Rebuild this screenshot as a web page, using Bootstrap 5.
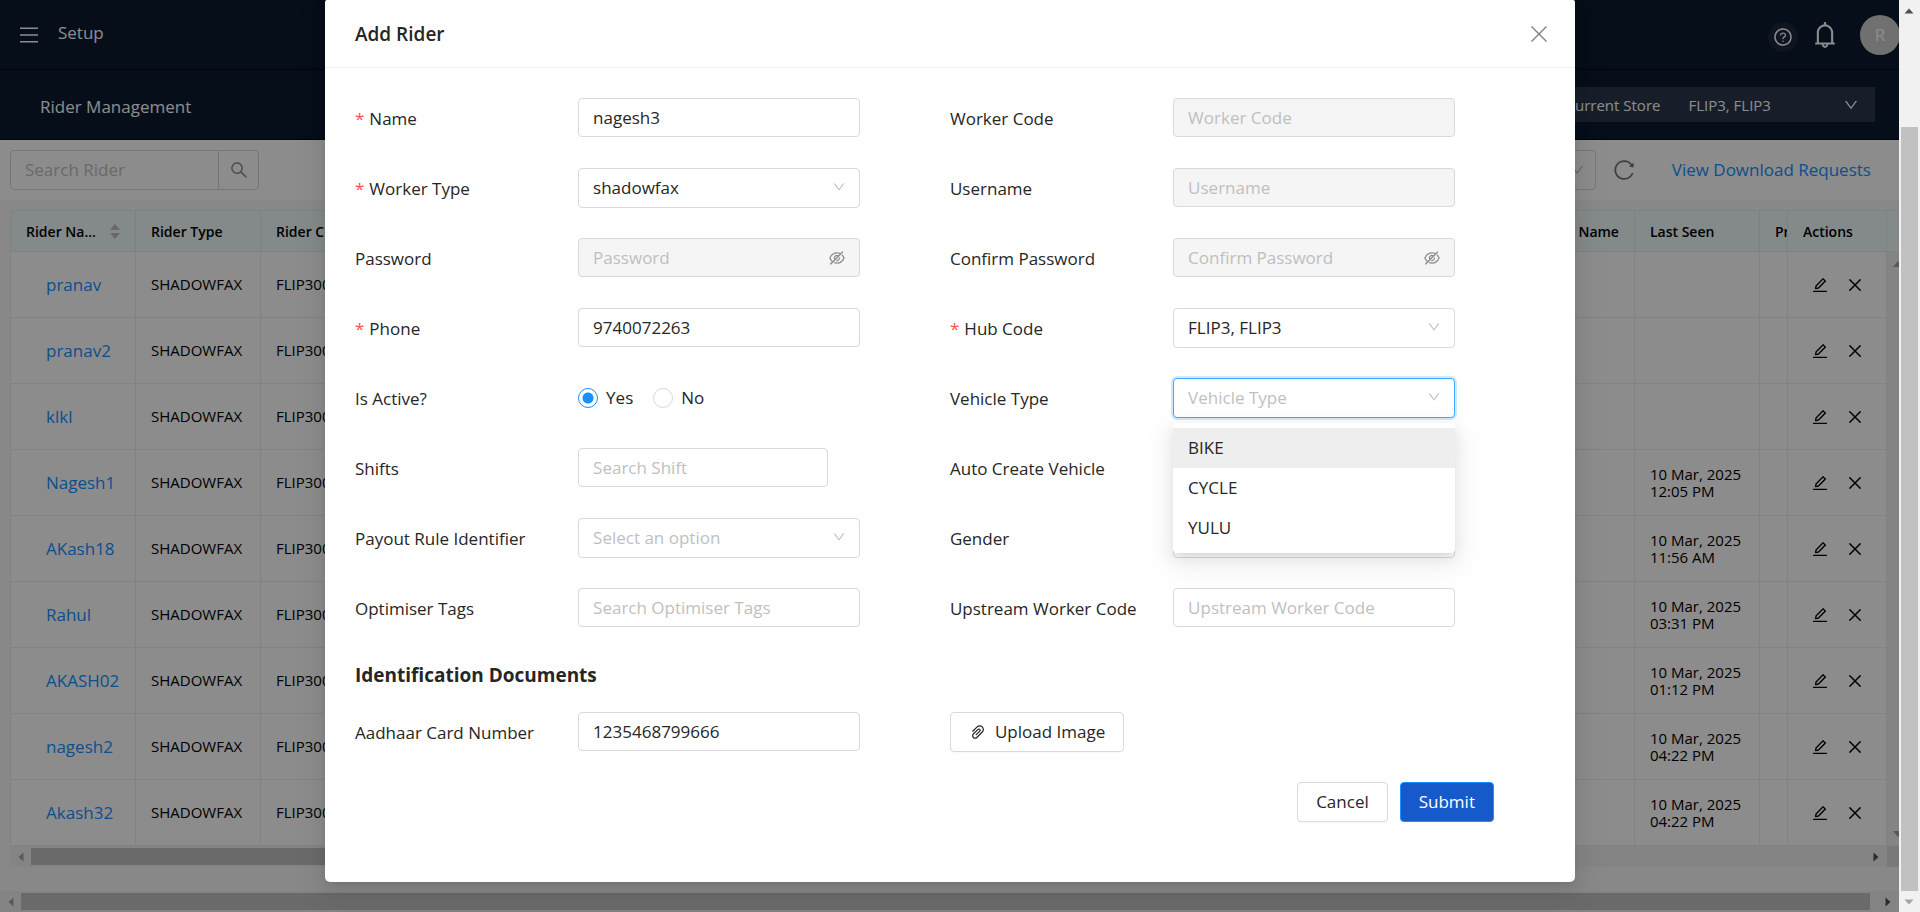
<!DOCTYPE html>
<html lang="en">
<head>
<meta charset="utf-8">
<meta name="viewport" content="width=device-width, initial-scale=1">
<title>Rider Management</title>
<link href="https://cdn.jsdelivr.net/npm/bootstrap@5.3.0/dist/css/bootstrap.min.css" rel="stylesheet">
<style>
  :root { --ink: #262626; --line: #d9d9d9; --hint: #bfbfbf; --blue: #1890ff; --navy: #0c1a30; }
  body { font-family: "Open Sans", "Noto Sans", sans-serif; font-size: 17px; line-height: 24px; color: var(--ink); background: #f8f8f8; }
  a { color: var(--blue); text-decoration: none; }
  .ico { width: 16px; height: 16px; fill: currentColor; display: block; flex: none; }
  .ico-12 { width: 12px; height: 12px; }
  .ico-18 { width: 18px; height: 18px; }
  .ico-20 { width: 20px; height: 20px; }
  .ico-24 { width: 24px; height: 24px; }
  .ico-30 { width: 30px; height: 30px; }
  .plain { background: none; border: 0; padding: 0; color: inherit; }
  .hint { color: var(--hint); }

  /* page behind the dialog */
  .top-bar { height: 70px; background: var(--navy); color: #fff; border-bottom: 1px solid #030914; }
  .page-name { font-size: 17px; font-weight: 400; line-height: 24px; }
  .help { width: 30px; height: 30px; background: #1b273c; }
  .avatar { width: 40px; height: 40px; background: #ccc; color: #fff; margin-right: -1px; }
  .store { height: 35px; width: 380px; background: #2b384d; font-size: 15px; }
  .tools { height: 60px; padding-left: 10px; background: #fff; }
  .box { height: 40px; border: 1px solid var(--line); border-radius: 4px; background: #fff; }
  .filter { width: 200px; }
  .finder { width: 249px; }
  .finder input { font-size: 17px; border: 0; padding: 0 14px; background: none; min-width: 0; }
  .finder input::placeholder, .field::placeholder { color: var(--hint); opacity: 1; }
  .finder button { width: 40px; flex: none; border-left: 1px solid var(--line); color: #8c8c8c; }

  .riders-area { padding: 10px 0 0 10px; }
  .riders { table-layout: fixed; border-collapse: separate; border-spacing: 0; font-size: 15px; line-height: 17px; font-weight: 500; color: #000; width: 100%; border-left: 1px solid #ededed; }
  .riders th { height: 42px; padding: 0 15px; font-size: 14px; background: #f0fafb; font-weight: 600; border: solid #e3ecec; border-width: 1px 1px 1px 0; white-space: nowrap; overflow: hidden; }
  .riders th:first-child { border-top-left-radius: 6px; }
  .riders td { height: 66px; padding: 0 15px; background: #fff; border: solid #ededed; border-width: 0 1px 1px 0; overflow: hidden; }
  .riders td:first-child { padding-left: 35px; font-size: 17px; font-weight: 400; }
  .riders td.gutter { background: #f1f1f1; border: 0; padding: 9px 0 9px 6px; vertical-align: top; color: #a3a3a3; }
  .riders tr:last-child td.gutter { vertical-align: bottom; }
  .gutter svg { width: 10px; height: 6px; fill: currentColor; display: block; }
  .riders th.gutter-head { border-right: 0; }
  .w-col { width: 125px; }
  .w-pr { width: 28px; }
  .w-act { width: 99px; }
  .w-gut { width: 12px; }
  .corner { background: #dcdcdc; }
  .sorter { color: var(--hint); gap: 3px; }
  .sorter svg { width: 10px; height: 6px; fill: currentColor; }

  /* scroll bars */
  .bar-x { height: 21px; background: #f1f1f1; }
  .bar-end { width: 21px; height: 21px; color: #505050; flex: none; }
  .bar-end svg { width: 10px; height: 10px; fill: currentColor; }
  .bar-end.spent { color: #a3a3a3; }
  .thumb-x { height: 17px; background: #c1c1c1; }
  .bar-y { width: 21px; background: #f1f1f1; flex: none; }
  .thumb-y { width: 17px; background: #c1c1c1; flex: 878 0 0; }
  .track-y { flex: 122 0 0; }

  .veil { position: absolute; inset: 0; background: rgba(0,0,0,.45); }
  .dialog-layer { position: absolute; inset: 0 -1px 0 0; }
  .dialog { width: 1250px; max-width: 100%; background: #fff; border: 0; border-radius: 2px 2px 5px 5px; box-shadow: 0 3px 6px -4px rgba(0,0,0,.12), 0 6px 16px rgba(0,0,0,.08), 0 9px 28px 8px rgba(0,0,0,.05); color: var(--ink); }
  .dialog-head { height: 68px; padding: 0 24px 0 30px; border-bottom: 1px solid #f0f0f0; }
  .dialog-title { font-size: 19px; font-weight: 600; line-height: 24px; }
  .dialog-form { padding: 30px 30px 60px; }
  .pair { margin-bottom: 30px; height: 40px; }
  .lab { width: 37.5%; padding-top: 2px; }
  .req::before { content: "*"; color: #ff4d4f; margin-right: 5px; }
  .field { display: block; height: 39px; margin-bottom: 1px; width: 100%; font-size: 17px; line-height: 24px; padding: 0 14px; color: var(--ink); border: 1px solid var(--line); border-radius: 4px; background-color: #fff; }
  .field:disabled { background-color: #f5f5f5; opacity: 1; }
  select.field { height: 40px; margin-bottom: 0; appearance: none; padding-right: 40px; }
  select.hinted { color: var(--hint); }
  select.opened { border-color: #40a9ff; box-shadow: 0 0 0 2px rgba(24,144,255,.2); outline: 0; }
  .short { width: 250px; }
  .field-ico { position: absolute; right: 30px; top: 11px; color: #8c8c8c; pointer-events: none; }
  .field-ico.arrow { color: var(--hint); width: 14px; height: 14px; top: 12px; }
  .choices { top: 45px; left: 0; right: 16px; width: auto; border: 0; border-radius: 4px; padding: 5px 0; margin: 0; box-shadow: 0 3px 6px -4px rgba(0,0,0,.12), 0 6px 16px rgba(0,0,0,.08), 0 9px 28px 8px rgba(0,0,0,.05); }
  .choices button { height: 40px; padding: 0 15px; font-size: 17px; color: var(--ink); }
  .choices .picked { background: #eee; }
  .dot { appearance: none; width: 20px; height: 20px; border: 1px solid var(--line); border-radius: 50%; margin: 0; background: #fff; }
  .dot:checked { border-color: var(--blue); background: radial-gradient(circle, var(--blue) 5px, #fff 6px); }
  .section-title { height: 54px; padding-top: 5px; font-size: 19px; font-weight: 700; line-height: 24px; margin: 0; }
  .act { height: 40px; font-size: 17px; line-height: 24px; padding: 0 18px; border: 1px solid var(--line); border-radius: 4px; color: var(--ink); background: #fff; box-shadow: 0 2px 0 rgba(0,0,0,.02); }
  .act-main { background: #1659cb; border-color: var(--blue); color: #fff; }
  .act-row { padding-right: 51px; gap: 12px; }
</style>
</head>
<body>
<svg class="d-none" aria-hidden="true">
  <symbol id="i-cross" viewBox="0 0 16 16"><path d="M.5.5l15 15M15.5.5l-15 15" fill="none" stroke="currentColor"/></symbol>
  <symbol id="i-down" viewBox="0 0 1024 1024"><path d="M884 256h-75c-5.1 0-9.9 2.5-12.9 6.6L512 654.2 227.9 262.6c-3-4.1-7.8-6.6-12.9-6.6h-75c-6.5 0-10.3 7.4-6.5 12.7l352.6 486.1c12.8 17.6 39 17.6 51.7 0l352.6-486.1c3.9-5.3.1-12.7-6.4-12.7z"/></symbol>
  <symbol id="i-search" viewBox="0 0 1024 1024"><path d="M909.6 854.5L649.9 594.8C690.2 542.7 712 479 712 412c0-80.2-31.3-155.4-87.9-212.1-56.6-56.7-132-87.9-212.1-87.9s-155.5 31.3-212.1 87.9C143.2 256.5 112 331.8 112 412c0 80.1 31.3 155.5 87.9 212.1C256.5 680.8 331.8 712 412 712c67 0 130.6-21.8 182.7-62l259.7 259.6a8.2 8.2 0 0011.6 0l43.6-43.5a8.2 8.2 0 000-11.6zM570.4 570.4C528 612.7 471.8 636 412 636s-116-23.3-158.4-65.6C211.3 528 188 471.8 188 412s23.3-116.1 65.6-158.4C296 211.3 352.2 188 412 188s116.1 23.2 158.4 65.6S636 352.2 636 412s-23.3 116.1-65.6 158.4z"/></symbol>
  <symbol id="i-reload" viewBox="0 0 1024 1024"><path d="M909.1 209.3l-56.4 44.1C775.8 155.1 656.2 92 521.9 92 290 92 102.3 279.5 102 511.5 101.7 743.7 289.8 932 521.9 932c181.3 0 335.8-115 394.6-276.1 1.5-4.2-.7-8.9-4.9-10.3l-56.7-19.5a8 8 0 00-10.1 4.8c-1.8 5-3.8 10-5.9 14.9-17.3 41-42.1 77.8-73.7 109.4A344.77 344.77 0 01655.9 829c-42.3 17.9-87.4 27-133.8 27-46.5 0-91.5-9.1-133.8-27A341.5 341.5 0 01279 755.2a342.16 342.16 0 01-73.7-109.4c-17.9-42.4-27-87.4-27-133.9s9.1-91.5 27-133.9c17.3-41 42.1-77.8 73.7-109.4 31.6-31.6 68.4-56.4 109.3-73.8 42.3-17.9 87.4-27 133.8-27 46.5 0 91.5 9.1 133.8 27a341.5 341.5 0 01109.3 73.8c9.9 9.9 19.2 20.4 27.8 31.4l-60.2 47a8 8 0 003 14.1l175.6 43c5 1.2 9.9-2.6 9.9-7.7l.8-180.9c-.1-6.6-7.8-10.3-13-6.2z"/></symbol>
  <symbol id="i-menu" viewBox="0 0 18 16"><path d="M0 .5h18v1.4H0zM0 7.3h18v1.4H0zM0 14.1h18v1.4H0z"/></symbol>
  <symbol id="i-bell" viewBox="0 0 1024 1024"><path d="M816 768h-24V428c0-141.1-104.3-257.8-240-277.2V112c0-22.1-17.9-40-40-40s-40 17.9-40 40v38.8C336.3 170.2 232 286.9 232 428v340h-24c-17.7 0-32 14.3-32 32v32c0 4.4 3.6 8 8 8h216c0 61.8 50.2 112 112 112s112-50.2 112-112h216c4.4 0 8-3.6 8-8v-32c0-17.7-14.3-32-32-32zM512 888c-26.5 0-48-21.5-48-48h96c0 26.5-21.5 48-48 48zM304 768V428c0-55.6 21.6-107.8 60.9-147.1S456.4 220 512 220c55.6 0 107.8 21.6 147.1 60.9S720 372.4 720 428v340H304z"/></symbol>
  <symbol id="i-help" viewBox="0 0 1024 1024"><path d="M512 64C264.6 64 64 264.6 64 512s200.6 448 448 448 448-200.6 448-448S759.4 64 512 64zm0 820c-205.4 0-372-166.6-372-372s166.6-372 372-372 372 166.6 372 372-166.6 372-372 372z"/><path d="M623.6 316.7C593.6 290.4 554 276 512 276s-81.6 14.5-111.6 40.7C369.2 344 352 380.7 352 420v7.6c0 4.4 3.6 8 8 8h48c4.4 0 8-3.6 8-8V420c0-44.1 43.1-80 96-80s96 35.9 96 80c0 31.1-22 59.6-56.1 72.7-21.2 8.1-39.2 22.3-52.1 40.9-13.1 19-19.9 41.8-19.9 64.9V620c0 4.4 3.6 8 8 8h48c4.4 0 8-3.6 8-8v-22.7a48.3 48.3 0 0130.9-44.8c59-22.7 97.1-74.7 97.1-132.5.1-39.3-17.1-76-48.3-103.3zM472 732a40 40 0 1080 0 40 40 0 10-80 0z"/></symbol>
  <symbol id="i-eye" viewBox="0 0 1024 1024"><path d="M942.2 486.2Q889.47 375.11 816.7 305l-50.88 50.88C807.31 395.53 843.45 447.4 874.7 512 791.5 684.2 673.4 766 512 766q-72.67 0-133.87-22.38L323 798.75Q408 838 512 838q288.3 0 430.2-300.3a60.29 60.29 0 000-51.5zm-63.57-320.64L836 122.88a8 8 0 00-11.32 0L715.31 232.2Q624.86 186 512 186q-288.3 0-430.2 300.3a60.3 60.3 0 000 51.5q56.69 119.4 136.5 191.41L112.48 835a8 8 0 000 11.31L155.17 889a8 8 0 0011.31 0l712.15-712.12a8 8 0 000-11.32zM149.3 512C232.6 339.8 350.7 258 512 258c54.54 0 104.13 9.36 149.12 28.39l-70.3 70.3a176 176 0 00-238.13 238.13l-83.42 83.42C223.1 637.49 183.3 582.28 149.3 512zm246.7 0a112.11 112.11 0 01146.2-106.69L401.31 546.2A112 112 0 01396 512z"/><path d="M508 624c-3.46 0-6.87-.16-10.25-.47l-52.82 52.82a176.09 176.09 0 00227.42-227.42l-52.82 52.82c.31 3.38.47 6.79.47 10.25a111.94 111.94 0 01-112 112z"/></symbol>
  <symbol id="i-edit" viewBox="0 0 1024 1024"><path d="M257.7 752c2 0 4-.2 6-.5L431.9 722c2-.4 3.9-1.3 5.3-2.8l423.9-423.9a9.96 9.96 0 000-14.1L694.9 114.9c-1.9-1.9-4.4-2.9-7.1-2.9s-5.2 1-7.1 2.9L256.8 538.8c-1.5 1.5-2.4 3.3-2.8 5.3l-29.5 168.2a33.5 33.5 0 009.4 29.8c6.6 6.4 14.9 9.9 23.8 9.9zm67.4-174.4L687.8 215l73.3 73.3-362.7 362.6-88.9 15.7 15.6-89zM880 836H144c-17.7 0-32 14.3-32 32v36c0 4.4 3.6 8 8 8h784c4.4 0 8-3.6 8-8v-36c0-17.7-14.3-32-32-32z"/></symbol>
  <symbol id="i-clip" viewBox="0 0 1024 1024"><path d="M779.3 196.6c-94.2-94.2-247.6-94.2-341.7 0l-261 260.8c-1.7 1.7-2.6 4-2.6 6.4s.9 4.7 2.6 6.4l36.9 36.9a9 9 0 0012.7 0l261-260.8c32.4-32.4 75.5-50.2 121.3-50.2s88.9 17.8 121.2 50.2c32.4 32.4 50.2 75.5 50.2 121.2 0 45.8-17.8 88.8-50.2 121.2l-266 265.9-43.1 43.1c-40.3 40.3-105.8 40.3-146.1 0-19.5-19.5-30.2-45.4-30.2-73s10.7-53.5 30.2-73l263.9-263.8c6.7-6.6 15.5-10.3 24.9-10.3h.1c9.4 0 18.1 3.7 24.7 10.3 6.7 6.7 10.3 15.5 10.3 24.9 0 9.3-3.7 18.1-10.3 24.7L372.4 653c-1.7 1.7-2.6 4-2.6 6.4s.9 4.7 2.6 6.4l36.9 36.9a9 9 0 0012.7 0l215.6-215.6c19.9-19.9 30.8-46.3 30.8-74.4s-11-54.6-30.8-74.4c-41.1-41.1-107.9-41-149 0L463 364 224.8 602.1A172.22 172.22 0 00174 724.8c0 46.3 18.1 89.8 50.8 122.5 33.9 33.8 78.3 50.7 122.7 50.7 44.4 0 88.8-16.9 122.6-50.7l309.2-309C824.8 492.7 850 432 850 367.5c.1-64.6-25.1-125.3-70.7-170.9z"/></symbol>
  <symbol id="c-up" viewBox="0 0 10 6"><path d="M5 0l5 6H0z"/></symbol>
  <symbol id="c-down" viewBox="0 0 10 6"><path d="M5 6L0 0h10z"/></symbol>
  <symbol id="t-up" viewBox="0 0 10 10"><path d="M5 2.5L9.5 7.5H.5z"/></symbol>
  <symbol id="t-down" viewBox="0 0 10 10"><path d="M5 7.5L.5 2.5h9z"/></symbol>
  <symbol id="t-left" viewBox="0 0 10 10"><path d="M2.5 5L7.5.5v9z"/></symbol>
  <symbol id="t-right" viewBox="0 0 10 10"><path d="M7.5 5L2.5.5v9z"/></symbol>
</svg>

<div class="d-flex min-vh-100">
  <div class="flex-grow-1 position-relative overflow-hidden d-flex flex-column">

    <header class="top-bar d-flex align-items-center">
      <button class="plain ms-3 ps-1 pe-3 me-1" aria-label="Menu"><svg class="ico ico-18"><use href="#i-menu"/></svg></button>
      <span class="flex-grow-1 pb-1">Setup</span>
      <button class="plain help rounded-circle d-flex align-items-center justify-content-center me-2 mt-1" aria-label="Help"><svg class="ico ico-20"><use href="#i-help"/></svg></button>
      <button class="plain ms-1 me-3" aria-label="Notifications"><svg class="ico ico-30"><use href="#i-bell"/></svg></button>
      <span class="avatar rounded-circle d-flex align-items-center justify-content-center ms-1">R</span>
    </header>

    <div class="top-bar d-flex align-items-center justify-content-between ps-4">
      <h1 class="page-name m-0 ps-3 pt-1">Rider Management</h1>
      <div class="store d-flex align-items-center justify-content-end me-4 pe-3">
        <span class="me-4 pe-1">Current Store</span>
        <button class="plain d-flex align-items-center" type="button"><span class="me-5 pe-3">FLIP3, FLIP3</span><svg class="ico ms-2"><use href="#i-down"/></svg></button>
      </div>
    </div>

    <div class="tools d-flex align-items-center justify-content-between">
      <div class="box finder d-flex">
        <input class="flex-grow-1" type="text" placeholder="Search Rider" aria-label="Search Rider">
        <button class="plain d-flex align-items-center justify-content-center" aria-label="Search"><svg class="ico ico-20"><use href="#i-search"/></svg></button>
      </div>
      <div class="d-flex align-items-center me-4 pe-1">
        <button class="box filter d-flex align-items-center justify-content-end" aria-label="Filter"><svg class="ico hint me-1"><use href="#i-down"/></svg></button>
        <button class="plain text-secondary ms-3 me-4" aria-label="Reload"><svg class="ico ico-24"><use href="#i-reload"/></svg></button>
        <a class="ms-2 ps-1" href="#">View Download Requests</a>
      </div>
    </div>

    <div class="riders-area flex-grow-1">
      <table class="riders">
        <colgroup><col class="w-col"><col class="w-col"><col><col class="w-col"><col class="w-col"><col class="w-pr"><col class="w-act"><col class="w-gut"></colgroup>
        <thead><tr>
          <th><span class="d-flex align-items-center justify-content-between">Rider Na... <span class="sorter d-flex flex-column"><svg><use href="#c-up"/></svg><svg><use href="#c-down"/></svg></span></span></th>
          <th>Rider Type</th><th>Rider Code</th><th class="text-end">Name</th><th>Last Seen</th><th>Pr</th><th>Actions</th><th class="gutter-head"></th>
        </tr></thead>
        <tbody id="rows"></tbody>
      </table>
      <div class="d-flex">
        <div class="bar-x d-flex align-items-center flex-grow-1">
          <span class="bar-end spent d-flex align-items-center justify-content-center"><svg><use href="#t-left"/></svg></span>
          <span class="thumb-x w-50"></span>
          <span class="bar-end d-flex align-items-center justify-content-center ms-auto"><svg><use href="#t-right"/></svg></span>
        </div>
        <div class="w-gut corner"></div>
      </div>
    </div>

    <div class="bar-x d-flex align-items-center">
      <span class="bar-end spent d-flex align-items-center justify-content-center"><svg><use href="#t-left"/></svg></span>
      <span class="thumb-x flex-grow-1 me-2"></span>
      <span class="bar-end d-flex align-items-center justify-content-center"><svg><use href="#t-right"/></svg></span>
    </div>

    <div class="veil"></div>

    <div class="dialog-layer" role="dialog" aria-labelledby="dlg-title">
      <div class="dialog modal-content mx-auto">
        <div class="dialog-head d-flex align-items-center justify-content-between">
          <h2 class="dialog-title m-0" id="dlg-title">Add Rider</h2>
          <button class="plain text-black-50 me-1" aria-label="Close"><svg class="ico" stroke-width="1.4"><use href="#i-cross"/></svg></button>
        </div>
        <form class="dialog-form" onsubmit="return false">
          <div class="row g-0">
            <div class="col-6 pair d-flex align-items-center"><label class="lab req" for="f1">Name</label><div class="col-6 pe-3"><input class="field" id="f1" type="text" value="nagesh3"></div></div>
            <div class="col-6 pair d-flex align-items-center"><label class="lab" for="f2">Worker Code</label><div class="col-6 pe-3"><input class="field" id="f2" type="text" placeholder="Worker Code" disabled></div></div>

            <div class="col-6 pair d-flex align-items-center"><label class="lab req" for="f3">Worker Type</label><div class="col-6 pe-3 position-relative"><select class="field" id="f3"><option>shadowfax</option></select><svg class="ico field-ico arrow"><use href="#i-down"/></svg></div></div>
            <div class="col-6 pair d-flex align-items-center"><label class="lab" for="f4">Username</label><div class="col-6 pe-3"><input class="field" id="f4" type="text" placeholder="Username" disabled></div></div>

            <div class="col-6 pair d-flex align-items-center"><label class="lab" for="f5">Password</label><div class="col-6 pe-3 position-relative"><input class="field" id="f5" type="password" placeholder="Password" disabled><svg class="ico ico-18 field-ico"><use href="#i-eye"/></svg></div></div>
            <div class="col-6 pair d-flex align-items-center"><label class="lab" for="f6">Confirm Password</label><div class="col-6 pe-3 position-relative"><input class="field" id="f6" type="password" placeholder="Confirm Password" disabled><svg class="ico ico-18 field-ico"><use href="#i-eye"/></svg></div></div>

            <div class="col-6 pair d-flex align-items-center"><label class="lab req" for="f7">Phone</label><div class="col-6 pe-3"><input class="field" id="f7" type="text" value="9740072263"></div></div>
            <div class="col-6 pair d-flex align-items-center"><label class="lab req" for="f8">Hub Code</label><div class="col-6 pe-3 position-relative"><select class="field" id="f8"><option>FLIP3, FLIP3</option></select><svg class="ico field-ico arrow"><use href="#i-down"/></svg></div></div>

            <div class="col-6 pair d-flex align-items-center"><span class="lab">Is Active?</span>
              <div class="d-flex align-items-center">
                <input class="dot" type="radio" name="active" id="yes" checked><label class="ms-2 me-3" for="yes">Yes</label>
                <input class="dot ms-1" type="radio" name="active" id="no"><label class="ms-2" for="no">No</label>
              </div></div>
            <div class="col-6 pair d-flex align-items-center"><label class="lab" for="f9">Vehicle Type</label>
              <div class="col-6 pe-3 position-relative"><select class="field hinted opened" id="f9"><option>Vehicle Type</option></select><svg class="ico field-ico arrow"><use href="#i-down"/></svg>
                <div class="choices dropdown-menu show">
                  <button type="button" class="dropdown-item picked">BIKE</button>
                  <button type="button" class="dropdown-item">CYCLE</button>
                  <button type="button" class="dropdown-item">YULU</button>
                </div>
              </div></div>

            <div class="col-6 pair d-flex align-items-center"><label class="lab" for="f10">Shifts</label><div class="short"><input class="field" id="f10" type="text" placeholder="Search Shift"></div></div>
            <div class="col-6 pair d-flex align-items-center"><span class="lab">Auto Create Vehicle</span></div>

            <div class="col-6 pair d-flex align-items-center"><label class="lab" for="f11">Payout Rule Identifier</label><div class="col-6 pe-3 position-relative"><select class="field hinted" id="f11"><option>Select an option</option></select><svg class="ico field-ico arrow"><use href="#i-down"/></svg></div></div>
            <div class="col-6 pair d-flex align-items-center"><label class="lab" for="f12">Gender</label><div class="col-6 pe-3"><select class="field hinted" id="f12"><option></option></select></div></div>

            <div class="col-6 pair d-flex align-items-center"><label class="lab" for="f13">Optimiser Tags</label><div class="col-6 pe-3"><input class="field" id="f13" type="text" placeholder="Search Optimiser Tags"></div></div>
            <div class="col-6 pair d-flex align-items-center"><label class="lab" for="f14">Upstream Worker Code</label><div class="col-6 pe-3"><input class="field" id="f14" type="text" placeholder="Upstream Worker Code"></div></div>
          </div>

          <h3 class="section-title">Identification Documents</h3>
          <div class="row g-0">
            <div class="col-6 pair d-flex align-items-center"><label class="lab" for="f15">Aadhaar Card Number</label><div class="col-6 pe-3"><input class="field" id="f15" type="text" value="1235468799666"></div></div>
            <div class="col-6 pair"><button type="button" class="act d-flex align-items-center"><svg class="ico ico-18 me-2"><use href="#i-clip"/></svg><span>Upload Image</span></button></div>
          </div>
          <div class="act-row d-flex justify-content-end">
            <button type="button" class="act">Cancel</button>
            <button type="submit" class="act act-main">Submit</button>
          </div>
        </form>
      </div>
    </div>
  </div>

  <div class="bar-y d-flex flex-column align-items-center">
    <span class="bar-end d-flex align-items-center justify-content-center"><svg><use href="#t-up"/></svg></span>
    <span class="track-y"></span>
    <span class="thumb-y"></span>
    <span class="bar-end spent d-flex align-items-center justify-content-center"><svg><use href="#t-down"/></svg></span>
  </div>
</div>

<script>
  const riders = [["pranav", ""], ["pranav2", ""], ["klkl", ""], ["Nagesh1", "12:05 PM"], ["AKash18", "11:56 AM"],
    ["Rahul", "03:31 PM"], ["AKASH02", "01:12 PM"], ["nagesh2", "04:22 PM"], ["Akash32", "04:22 PM"]];
  const arrow = i => i === 0 ? '<svg><use href="#c-up"/></svg>' : i === riders.length - 1 ? '<svg><use href="#c-down"/></svg>' : '';
  document.getElementById("rows").innerHTML = riders.map(([name, time], i) => `<tr>
    <td><a href="#">${name}</a></td><td>SHADOWFAX</td><td>FLIP300</td><td></td>
    <td>${time ? "10 Mar, 2025<br>" + time : ""}</td><td></td>
    <td><span class="d-flex align-items-center ps-2"><button class="plain me-3" aria-label="Edit"><svg class="ico ico-18"><use href="#i-edit"/></svg></button><button class="plain ms-1" aria-label="Remove"><svg class="ico ico-12" stroke-width="2"><use href="#i-cross"/></svg></button></span></td>
    <td class="gutter">${arrow(i)}</td></tr>`).join("");
</script>
<script src="https://cdn.jsdelivr.net/npm/bootstrap@5.3.0/dist/js/bootstrap.bundle.min.js"></script>
</body>
</html>
